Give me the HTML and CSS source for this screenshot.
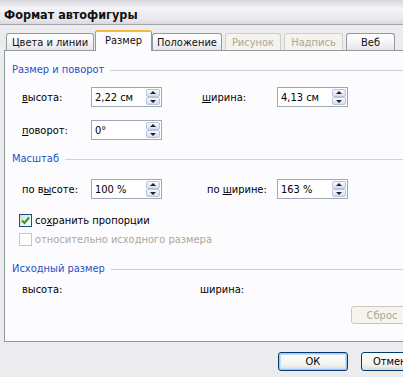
FILE: index.html
```html
<!DOCTYPE html>
<html lang="ru">

<head>
    <meta charset="UTF-8">
    <meta name="viewport" content="width=device-width, initial-scale=1.0">
    <title>Формат автофигуры</title>
    <link rel="stylesheet" href="styles.css">
</head>

<body>
    <div class="titlebar">Формат автофигуры</div>

    <div class="tabs">
        <div class="tab tab-colors">Цвета и линии</div>
        <div class="tab tab-size active">Размер</div>
        <div class="tab tab-pos">Положение</div>
        <div class="tab tab-pic disabled">Рисунок</div>
        <div class="tab tab-text disabled">Надпись</div>
        <div class="tab tab-web">Веб</div>
    </div>

    <div class="panel">
        <div class="group-title first"><span>Размер и поворот</span></div>
        <div class="row row-size">
            <div class="field">
                <label><u>в</u>ысота:</label>
                <div class="spinbox"><span class="value">2,22 см</span>
                    <div class="spin"><b class="up"></b><b class="down"></b></div>
                </div>
            </div>
            <div class="field field-right">
                <label><u>ш</u>ирина:</label>
                <div class="spinbox"><span class="value">4,13 см</span>
                    <div class="spin"><b class="up"></b><b class="down"></b></div>
                </div>
            </div>
        </div>
        <div class="row row-rotate">
            <div class="field">
                <label><u>п</u>оворот:</label>
                <div class="spinbox"><span class="value">0°</span>
                    <div class="spin"><b class="up"></b><b class="down"></b></div>
                </div>
            </div>
        </div>

        <div class="group-title scale"><span>Масштаб</span></div>
        <div class="row row-scale">
            <div class="field">
                <label>по в<u>ы</u>соте:</label>
                <div class="spinbox"><span class="value">100 %</span>
                    <div class="spin"><b class="up"></b><b class="down"></b></div>
                </div>
            </div>
            <div class="field field-right shift">
                <label>по <u>ш</u>ирине:</label>
                <div class="spinbox"><span class="value">163 %</span>
                    <div class="spin"><b class="up"></b><b class="down"></b></div>
                </div>
            </div>
        </div>
        <div class="check check-keep">
            <span class="box checked">
                <svg width="9" height="9" viewBox="0 0 9 9"><path d="M1 4.5 L3.5 7 L8 1.5" fill="none" stroke="#21a121" stroke-width="2"/></svg>
            </span>
            <span>со<u>х</u>ранить пропорции</span>
        </div>
        <div class="check check-rel disabled">
            <span class="box"></span>
            <span>относительно исходного размера</span>
        </div>

        <div class="group-title orig"><span>Исходный размер</span></div>
        <div class="row row-orig">
            <span class="orig-label">высота:</span>
            <span class="orig-label">ширина:</span>
        </div>
        <div class="reset-row">
            <div class="btn btn-disabled">Сброс</div>
        </div>
    </div>

    <div class="footer">
        <div class="btn btn-default">ОК</div>
        <div class="btn btn-cancel">Отмена</div>
    </div>
</body>

</html>
```

FILE: styles.css
```css
body {
    margin: 0;
    width: 403px;
    height: 377px;
    overflow: hidden;
    background: #ecebee;
    font-family: "DejaVu Sans Condensed", "DejaVu Sans", sans-serif;
    font-size: 11px;
    color: #000;
}

.titlebar {
    height: 21px;
    padding: 3px 0 0 4px;
    line-height: 24px;
    font-size: 12.5px;
    font-weight: bold;
    color: #111;
    border-bottom: 1px solid #a3a3ad;
    background: linear-gradient(#d6d6dc, #f4f4f7 35%, #e8e8ed 80%, #d8d8de);
}

/* tabs */
.tabs {
    display: flex;
    align-items: flex-end;
    height: 25px;
    padding-left: 6px;
}

.tab {
    flex-shrink: 0;
    box-sizing: border-box;
    height: 17px;
    padding-top: 2px;
    text-align: center;
    line-height: 14px;
    color: #111;
    border: 1px solid #919b9c;
    border-bottom: none;
    border-radius: 3px 3px 0 0;
    background: linear-gradient(#ffffff, #f3f3f6 60%, #e4e4ea);
}

.tab-colors { width: 88px; }
.tab-size { width: 57px; margin-left: 1px; }
.tab-pos { width: 70px; }
.tab-pic { width: 56px; margin-left: 3px; }
.tab-text { width: 59px; margin-left: 3px; }
.tab-web { width: 49px; margin-left: 3px; }

.tab.active {
    position: relative;
    z-index: 1;
    height: 21px;
    margin-bottom: -1px;
    padding-top: 2px;
    border-top: 2px solid #f5b942;
    background: #fcfcfe;
}

.tab.disabled {
    color: #aca899;
    border-color: #d2d0c6;
    background: #f4f3ee;
}

/* panel */
.panel {
    box-sizing: border-box;
    width: 420px;
    height: 292px;
    margin-left: 4px;
    padding-left: 7px;
    border: 1px solid #919b9c;
    background: #fcfcfe;
}

.group-title {
    display: flex;
    align-items: center;
    height: 14px;
    line-height: 14px;
    color: #2352c8;
    margin-right: 8px;
}

.group-title span {
    padding-right: 6px;
}

.group-title::after {
    content: "";
    flex: 1;
    border-top: 1px solid #d0d0d6;
}

.group-title.first { margin-top: 12px; }
.group-title.scale { margin-top: 12px; }
.group-title.orig { margin-top: 16px; }

.row {
    display: flex;
    align-items: center;
    height: 20px;
    padding-left: 10px;
}

.row-size { margin-top: 10px; }
.row-rotate { margin-top: 13px; }
.row-scale { margin-top: 13px; }

.field {
    display: flex;
    align-items: center;
}

.field label {
    width: 69px;
}

.field-right {
    margin-left: 40px;
}

.field-right label {
    width: 75px;
}

.field-right.shift label {
    width: 70px;
    padding-left: 5px;
}

.spinbox {
    box-sizing: border-box;
    display: flex;
    align-items: center;
    width: 71px;
    height: 20px;
    padding-left: 3px;
    border: 1px solid #a0a8b4;
    background: #fff;
}

.spinbox .value {
    flex: 1;
}

.spin {
    display: flex;
    flex-direction: column;
    width: 14px;
    margin-right: 1px;
}

.spin b {
    position: relative;
    box-sizing: border-box;
    height: 8px;
    border: 1px solid #b8c4dc;
    border-radius: 2px;
    background: linear-gradient(#f8faff, #d4dcee);
}

.spin b::after {
    content: "";
    position: absolute;
    left: 3px;
    top: 1px;
    border-left: 3px solid transparent;
    border-right: 3px solid transparent;
}

.spin .up::after {
    border-bottom: 3px solid #222;
}

.spin .down::after {
    top: 2px;
    border-top: 3px solid #222;
}

/* checkboxes */
.check {
    display: flex;
    align-items: center;
    height: 14px;
    padding-left: 7px;
}

.check-keep { margin-top: 14px; }
.check-rel { margin-top: 5px; }

.check .box {
    box-sizing: border-box;
    display: flex;
    align-items: center;
    justify-content: center;
    width: 13px;
    height: 13px;
    margin-right: 3px;
    border: 1px solid #1c5180;
    background: linear-gradient(135deg, #dcdcd6, #ffffff);
}

.check.disabled {
    color: #aca899;
}

.check.disabled .box {
    border-color: #cac8bb;
    background: #fff;
}

.row-orig {
    height: 14px;
    margin-top: 6px;
}

.orig-label {
    width: 178px;
}

/* buttons */
.reset-row {
    display: flex;
    margin-top: 10px;
    padding-left: 339px;
}

.btn {
    flex-shrink: 0;
    box-sizing: border-box;
    width: 70px;
    height: 19px;
    line-height: 17px;
    text-align: center;
    border: 1px solid #003c74;
    border-radius: 3px;
    background: linear-gradient(#ffffff, #f2f2ee 70%, #dcdad0);
}

.btn-disabled {
    width: 62px;
    height: 18px;
    color: #aca899;
    border-color: #cac8bb;
    background: #f5f4ee;
}

.btn-default {
    box-shadow: inset 0 0 0 1px #a8c4f0, inset 0 0 0 2px #cfdcf6;
}

.btn-cancel {
    text-align: left;
    padding-left: 11px;
}

.footer {
    display: flex;
    gap: 13px;
    margin-top: 10px;
    padding-left: 278px;
}
```
